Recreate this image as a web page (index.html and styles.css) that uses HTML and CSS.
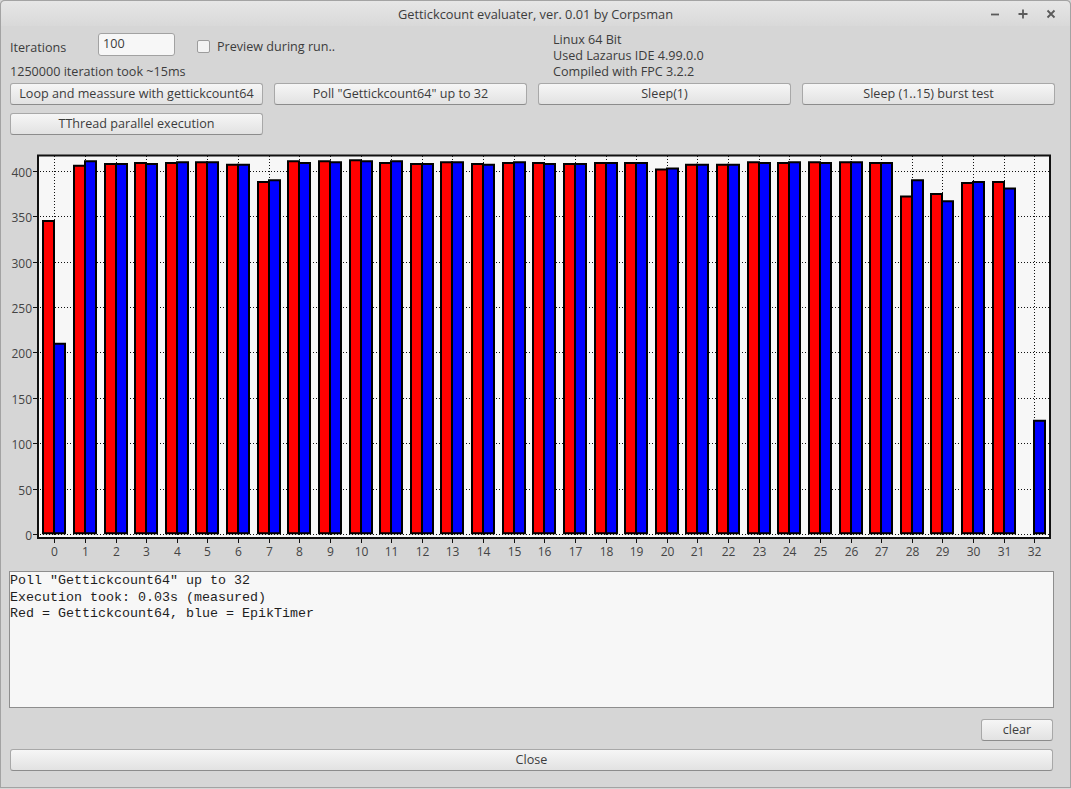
FILE: index.html
```html
<!DOCTYPE html>
<html lang="en">
<head>
<meta charset="utf-8">
<title>Gettickcount evaluater</title>
<link rel="stylesheet" href="styles.css">
</head>
<body>
<div class="window">
  <div class="titlebar">
    <div class="title">Gettickcount evaluater, ver. 0.01 by Corpsman</div>
    <div class="controls">
      <svg viewBox="0 0 18 18"><path d="M5 9.5H13"/></svg>
      <svg viewBox="0 0 18 18"><path d="M4.5 9H13.5M9 4.5V13.5"/></svg>
      <svg viewBox="0 0 18 18"><path d="M5.5 5.5L12.5 12.5M12.5 5.5L5.5 12.5"/></svg>
    </div>
  </div>

  <div class="top">
    <div class="left">
      <div class="iter-row">
        <span class="lbl-iter">Iterations</span>
        <div class="edit">100</div>
        <div class="check"></div>
        <span class="lbl-prev">Preview during run..</span>
      </div>
      <div class="status">1250000 iteration took ~15ms</div>
    </div>
    <div class="info">
      <div>Linux 64 Bit</div>
      <div>Used Lazarus IDE 4.99.0.0</div>
      <div>Compiled with FPC 3.2.2</div>
    </div>
  </div>

  <div class="buttons">
    <div class="btn">Loop and meassure with gettickcount64</div>
    <div class="btn">Poll "Gettickcount64" up to 32</div>
    <div class="btn">Sleep(1)</div>
    <div class="btn">Sleep (1..15) burst test</div>
    <div class="btn">TThread parallel execution</div>
  </div>

  <svg class="chart" viewBox="0 0 1071 420" width="1071" height="420">
    <rect class="frame" x="38" y="10.5" width="1012" height="382.5"/>
    <path class="grid" d="M40 26.5H1049M40 71.5H1049M40 117.5H1049M40 162.5H1049M40 207.5H1049M40 253.5H1049M40 298.5H1049M40 344.5H1049M40 389.5H1049"/>
    <path class="grid" d="M54.5 11V392M85.5 11V392M116.5 11V392M146.5 11V392M177.5 11V392M207.5 11V392M238.5 11V392M269.5 11V392M299.5 11V392M330.5 11V392M361.5 11V392M391.5 11V392M422.5 11V392M452.5 11V392M483.5 11V392M514.5 11V392M544.5 11V392M575.5 11V392M606.5 11V392M636.5 11V392M667.5 11V392M697.5 11V392M728.5 11V392M759.5 11V392M789.5 11V392M820.5 11V392M851.5 11V392M881.5 11V392M912.5 11V392M942.5 11V392M973.5 11V392M1004.5 11V392M1034.5 11V392"/>
    <path class="tick" d="M33 26.5h5M33 71.5h5M33 117.5h5M33 162.5h5M33 207.5h5M33 253.5h5M33 298.5h5M33 344.5h5M33 389.5h5"/>
    <path class="tick" d="M54.5 394v4M85.5 394v4M116.5 394v4M146.5 394v4M177.5 394v4M207.5 394v4M238.5 394v4M269.5 394v4M299.5 394v4M330.5 394v4M361.5 394v4M391.5 394v4M422.5 394v4M452.5 394v4M483.5 394v4M514.5 394v4M544.5 394v4M575.5 394v4M606.5 394v4M636.5 394v4M667.5 394v4M697.5 394v4M728.5 394v4M759.5 394v4M789.5 394v4M820.5 394v4M851.5 394v4M881.5 394v4M912.5 394v4M942.5 394v4M973.5 394v4M1004.5 394v4M1034.5 394v4"/>
    <g class="ylabels">
      <text x="32" y="31.5">400</text>
      <text x="32" y="76.5">350</text>
      <text x="32" y="122.5">300</text>
      <text x="32" y="167.5">250</text>
      <text x="32" y="212.5">200</text>
      <text x="32" y="258.5">150</text>
      <text x="32" y="303.5">100</text>
      <text x="32" y="349.5">50</text>
      <text x="32" y="394.5">0</text>
    </g>
    <g class="xlabels">
      <text x="54.5" y="411">0</text>
      <text x="85.5" y="411">1</text>
      <text x="116.5" y="411">2</text>
      <text x="146.5" y="411">3</text>
      <text x="177.5" y="411">4</text>
      <text x="207.5" y="411">5</text>
      <text x="238.5" y="411">6</text>
      <text x="269.5" y="411">7</text>
      <text x="299.5" y="411">8</text>
      <text x="330.5" y="411">9</text>
      <text x="361.5" y="411">10</text>
      <text x="391.5" y="411">11</text>
      <text x="422.5" y="411">12</text>
      <text x="452.5" y="411">13</text>
      <text x="483.5" y="411">14</text>
      <text x="514.5" y="411">15</text>
      <text x="544.5" y="411">16</text>
      <text x="575.5" y="411">17</text>
      <text x="606.5" y="411">18</text>
      <text x="636.5" y="411">19</text>
      <text x="667.5" y="411">20</text>
      <text x="697.5" y="411">21</text>
      <text x="728.5" y="411">22</text>
      <text x="759.5" y="411">23</text>
      <text x="789.5" y="411">24</text>
      <text x="820.5" y="411">25</text>
      <text x="851.5" y="411">26</text>
      <text x="881.5" y="411">27</text>
      <text x="912.5" y="411">28</text>
      <text x="942.5" y="411">29</text>
      <text x="973.5" y="411">30</text>
      <text x="1004.5" y="411">31</text>
      <text x="1034.5" y="411">32</text>
    </g>
    <g class="bars" transform="translate(0 388.3) scale(1 -0.9075)">
      <rect class="r" x="43" y="0" width="11" height="344"/>
      <rect class="r" x="74" y="0" width="11" height="405"/>
      <rect class="r" x="105" y="0" width="11" height="407"/>
      <rect class="r" x="135" y="0" width="11" height="408"/>
      <rect class="r" x="166" y="0" width="11" height="408"/>
      <rect class="r" x="196" y="0" width="11" height="409"/>
      <rect class="r" x="227" y="0" width="11" height="406"/>
      <rect class="r" x="258" y="0" width="11" height="387"/>
      <rect class="r" x="288" y="0" width="11" height="410"/>
      <rect class="r" x="319" y="0" width="11" height="410"/>
      <rect class="r" x="350" y="0" width="11" height="411"/>
      <rect class="r" x="380" y="0" width="11" height="408"/>
      <rect class="r" x="411" y="0" width="11" height="407"/>
      <rect class="r" x="441" y="0" width="11" height="409"/>
      <rect class="r" x="472" y="0" width="11" height="407"/>
      <rect class="r" x="503" y="0" width="11" height="408"/>
      <rect class="r" x="533" y="0" width="11" height="408"/>
      <rect class="r" x="564" y="0" width="11" height="407"/>
      <rect class="r" x="595" y="0" width="11" height="408"/>
      <rect class="r" x="625" y="0" width="11" height="408"/>
      <rect class="r" x="656" y="0" width="11" height="401"/>
      <rect class="r" x="686" y="0" width="11" height="406"/>
      <rect class="r" x="717" y="0" width="11" height="406"/>
      <rect class="r" x="748" y="0" width="11" height="409"/>
      <rect class="r" x="778" y="0" width="11" height="408"/>
      <rect class="r" x="809" y="0" width="11" height="409"/>
      <rect class="r" x="840" y="0" width="11" height="409"/>
      <rect class="r" x="870" y="0" width="11" height="408"/>
      <rect class="r" x="901" y="0" width="11" height="371"/>
      <rect class="r" x="931" y="0" width="11" height="374"/>
      <rect class="r" x="962" y="0" width="11" height="386"/>
      <rect class="r" x="993" y="0" width="11" height="387"/>

      <rect class="b" x="54" y="0" width="11" height="209"/>
      <rect class="b" x="85" y="0" width="11" height="410"/>
      <rect class="b" x="116" y="0" width="11" height="407"/>
      <rect class="b" x="146" y="0" width="11" height="407"/>
      <rect class="b" x="177" y="0" width="11" height="409"/>
      <rect class="b" x="207" y="0" width="11" height="409"/>
      <rect class="b" x="238" y="0" width="11" height="406"/>
      <rect class="b" x="269" y="0" width="11" height="389"/>
      <rect class="b" x="299" y="0" width="11" height="408"/>
      <rect class="b" x="330" y="0" width="11" height="409"/>
      <rect class="b" x="361" y="0" width="11" height="410"/>
      <rect class="b" x="391" y="0" width="11" height="410"/>
      <rect class="b" x="422" y="0" width="11" height="407"/>
      <rect class="b" x="452" y="0" width="11" height="409"/>
      <rect class="b" x="483" y="0" width="11" height="406"/>
      <rect class="b" x="514" y="0" width="11" height="409"/>
      <rect class="b" x="544" y="0" width="11" height="407"/>
      <rect class="b" x="575" y="0" width="11" height="407"/>
      <rect class="b" x="606" y="0" width="11" height="408"/>
      <rect class="b" x="636" y="0" width="11" height="408"/>
      <rect class="b" x="667" y="0" width="11" height="402"/>
      <rect class="b" x="697" y="0" width="11" height="406"/>
      <rect class="b" x="728" y="0" width="11" height="406"/>
      <rect class="b" x="759" y="0" width="11" height="408"/>
      <rect class="b" x="789" y="0" width="11" height="409"/>
      <rect class="b" x="820" y="0" width="11" height="408"/>
      <rect class="b" x="851" y="0" width="11" height="409"/>
      <rect class="b" x="881" y="0" width="11" height="408"/>
      <rect class="b" x="912" y="0" width="11" height="389"/>
      <rect class="b" x="942" y="0" width="11" height="366"/>
      <rect class="b" x="973" y="0" width="11" height="387"/>
      <rect class="b" x="1004" y="0" width="11" height="380"/>
      <rect class="b" x="1034" y="0" width="11" height="124"/>
    </g>
  </svg>

  <div class="memo"><div>Poll "Gettickcount64" up to 32</div><div>Execution took: 0.03s (measured)</div><div>Red = Gettickcount64, blue = EpikTimer</div></div>

  <div class="clear-row"><div class="btn btn-clear">clear</div></div>
  <div class="btn btn-close">Close</div>
</div>
</body>
</html>
```

FILE: styles.css
```css
* { box-sizing: border-box; }
html, body { margin: 0; padding: 0; }
body {
  width: 1071px;
  height: 789px;
  overflow: hidden;
  background: #d6d6d6;
  font-family: "Open Sans", "Noto Sans", sans-serif;
  font-size: 12.6px;
  line-height: 16px;
  color: #3c3c3c;
}
.window {
  height: 788px;
  display: flex;
  flex-direction: column;
  border-radius: 5px 5px 0 0;
  box-shadow: inset 1px 0 0 #a3a3a3, inset -1px 0 0 #a3a3a3, inset 0 -1px 0 #a3a3a3;
}
.titlebar {
  height: 26px;
  flex: none;
  display: grid;
  grid-template-columns: 1fr auto 1fr;
  align-items: center;
  background: linear-gradient(#e6e6e6, #d9d9d9);
  border: 1px solid #a3a3a3;
  border-bottom: 0;
  border-radius: 5px 5px 0 0;
}
.title { grid-column: 2; color: #3c3c3c; font-size: 12.8px; }
.controls {
  grid-column: 3;
  justify-self: end;
  display: flex;
  gap: 10px;
  padding-right: 10px;
}
.controls svg { width: 18px; height: 18px; display: block; }
.controls path { stroke: #5a5a5a; stroke-width: 1.8; fill: none; }

.top {
  height: 57px;
  flex: none;
  display: grid;
  grid-template-columns: 543px 1fr;
  padding-left: 10px;
}
.iter-row {
  display: flex;
  align-items: center;
  height: 23px;
  margin-top: 7px;
}
.lbl-iter { width: 88px; margin-top: 6px; }
.edit {
  width: 77px;
  height: 23px;
  border: 1px solid #a2a2a2;
  border-radius: 3px;
  background: #f7f7f7;
  padding-left: 4px;
  line-height: 20px;
}
.check {
  width: 13px;
  height: 13px;
  margin: 4px 0 0 22px;
  border: 1px solid #9c9c9c;
  border-radius: 2px;
  background: #f3f3f3;
}
.lbl-prev { margin: 4px 0 0 7px; }
.status { margin-top: 8px; }
.info { padding-top: 6px; }

.buttons {
  flex: none;
  display: grid;
  grid-template-columns: repeat(4, 253px);
  column-gap: 11px;
  row-gap: 8px;
  padding-left: 10px;
}
.btn {
  height: 22px;
  border: 1px solid #a8a8a8;
  border-bottom-color: #8c8c8c;
  border-radius: 3px;
  background: linear-gradient(#f6f6f6, #e2e2e2);
  text-align: center;
  line-height: 20px;
  color: #3c3c3c;
  white-space: nowrap;
}

.chart { display: block; flex: none; margin-top: 10px; }
.frame { fill: #f7f7f7; stroke: #111; stroke-width: 2; }
.grid { fill: none; stroke: #111; stroke-width: 1; stroke-dasharray: 1 2; }
.tick { fill: none; stroke: #111; stroke-width: 1; }
.ylabels text, .xlabels text {
  font-family: "Open Sans", "Noto Sans", sans-serif;
  font-size: 12px;
  fill: #444;
}
.ylabels text { text-anchor: end; }
.xlabels text { text-anchor: middle; }
.bars rect { stroke: #000; stroke-width: 2; vector-effect: non-scaling-stroke; }
.bars .r { fill: #ff0000; }
.bars .b { fill: #0000ff; }

.memo {
  flex: none;
  margin: 6px 0 0 9px;
  width: 1045px;
  height: 137px;
  border: 1px solid #8e8e8e;
  background: #f7f7f7;
  padding-top: 1px;
  font-family: "Liberation Mono", "DejaVu Sans Mono", monospace;
  font-size: 13.33px;
  line-height: 16.6px;
  color: #1e1e1e;
  white-space: pre;
}
.clear-row {
  flex: none;
  display: flex;
  justify-content: flex-end;
  padding-right: 18px;
  margin-top: 11px;
}
.btn-clear { width: 72px; }
.btn-close {
  flex: none;
  margin: 8px 18px 0 10px;
}
```
